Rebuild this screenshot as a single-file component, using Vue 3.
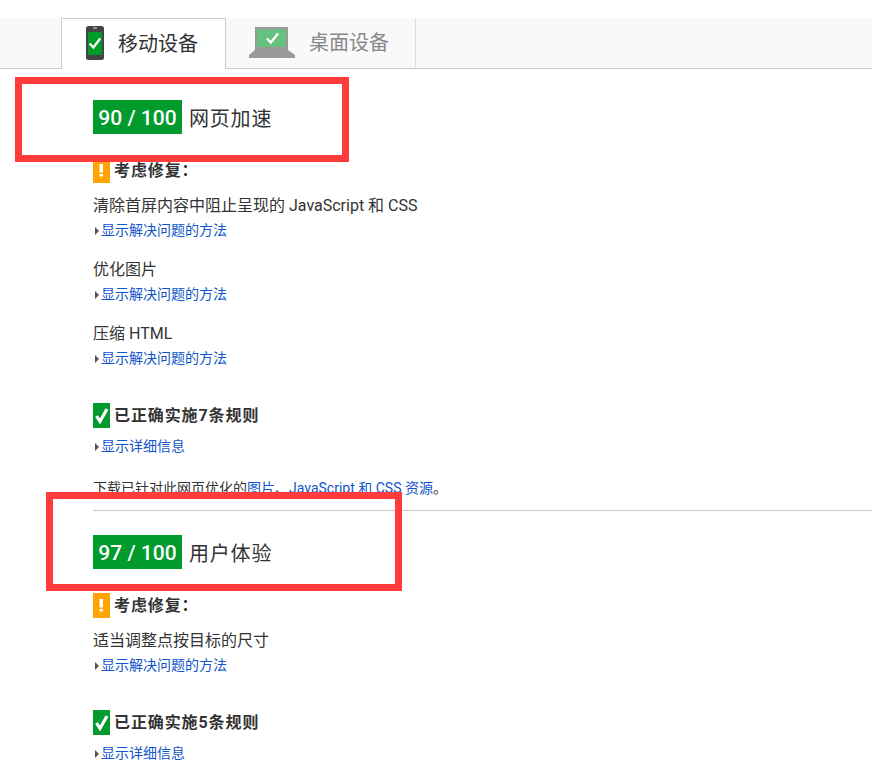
<script setup>
const sections = [
  {
    score: '90 / 100',
    label: '网页加速',
    fixes: ['清除首屏内容中阻止呈现的 JavaScript 和 CSS', '优化图片', '压缩 HTML'],
    passed: '已正确实施7条规则',
  },
  {
    score: '97 / 100',
    label: '用户体验',
    fixes: ['适当调整点按目标的尺寸'],
    passed: '已正确实施5条规则',
  },
]
</script>

<template>
  <div class="page">
    <nav class="tabs">
      <div class="tab active">
        <svg class="tab-icon" width="18" height="34" viewBox="0 0 18 34">
          <rect x="0" y="0" width="18" height="34" rx="2.5" fill="#444" />
          <rect x="7" y="1.5" width="4" height="1" fill="#ddd" />
          <rect x="2" y="6" width="14" height="23" fill="#009a2d" />
          <path d="M3.6 17.5 L7.4 21.5 L14.2 12.6" fill="none" stroke="#fff" stroke-width="2.4" />
        </svg>
        <span>移动设备</span>
      </div>
      <div class="tab idle">
        <svg class="tab-icon" width="46" height="31" viewBox="0 0 46 31">
          <rect x="6" y="0" width="33" height="23" fill="#999" />
          <rect x="8" y="2" width="29" height="18" fill="#66c17f" />
          <path d="M18 11.5 L21.8 15.5 L29 6.5" fill="none" stroke="#fff" stroke-width="2.4" />
          <path d="M6 23 H39 L46 28 V31 H0 V28 Z" fill="#999" />
        </svg>
        <span>桌面设备</span>
      </div>
    </nav>

    <main class="content">
      <section v-for="(s, i) in sections" :key="s.label" class="section">
        <hr v-if="i > 0" class="divider" />
        <h2 class="head">
          <span class="score">{{ s.score }}</span>
          <span class="label">{{ s.label }}</span>
        </h2>

        <h3 class="group warn-group">
          <span class="mark warn">
            <svg width="17" height="25" viewBox="0 0 17 25">
              <rect x="6.5" y="6" width="3.5" height="8.5" fill="#fff" />
              <rect x="6.5" y="16" width="3.5" height="2.5" fill="#fff" />
            </svg>
          </span>
          <span class="group-text">考虑修复：</span>
        </h3>
        <div v-for="(f, j) in s.fixes" :key="f" class="fix" :class="{ first: j === 0 }">
          <p class="fix-title">{{ f }}</p>
          <a class="more"><i class="arrow"></i>显示解决问题的方法</a>
        </div>

        <h3 class="group ok-group">
          <span class="mark ok">
            <svg width="17" height="25" viewBox="0 0 17 25">
              <path d="M3.5 13 L7 18.5 L14 6" fill="none" stroke="#fff" stroke-width="3.2" />
            </svg>
          </span>
          <span class="group-text">{{ s.passed }}</span>
        </h3>
        <a class="more detail"><i class="arrow"></i>显示详细信息</a>

        <p v-if="i === 0" class="note">
          下载已针对此网页优化的<a>图片、JavaScript 和 CSS 资源</a>。
        </p>
      </section>
    </main>

    <div class="callout one"></div>
    <div class="callout two"></div>
  </div>
</template>

<style scoped>
.page {
  position: relative;
  width: 872px;
  height: 767px;
  overflow: hidden;
  background: #fff;
  color: #333;
  font-family: Roboto, "Noto Sans CJK SC", sans-serif;
}
.tabs {
  display: flex;
  box-sizing: border-box;
  height: 51px;
  margin-top: 18px;
  padding-left: 61px;
  background: #f9f9f9;
  border-bottom: 1px solid #ccc;
}
.tab {
  display: flex;
  align-items: center;
  box-sizing: border-box;
  font-size: 20px;
}
.tab-icon {
  flex: none;
  margin-top: 2px;
}
.tab.active {
  width: 165px;
  height: 51px;
  padding: 0 0 4px 24px;
  gap: 14px;
  background: #fff;
  border: 1px solid #ccc;
  border-bottom: 0;
}
.tab.idle {
  width: 190px;
  height: 50px;
  padding: 0 0 4px 23px;
  gap: 14px;
  color: #888;
  border-right: 1px solid #ddd;
}
.content {
  padding-left: 93px;
}
.head {
  display: flex;
  align-items: center;
  gap: 7px;
  height: 34px;
  margin: 31px 0 0;
  font-size: 20px;
  font-weight: 400;
}
.label {
  letter-spacing: 0.8px;
}
.section + .section .head {
  margin-top: 24px;
}
.score {
  box-sizing: border-box;
  width: 89px;
  height: 34px;
  line-height: 36px;
  text-align: center;
  color: #fff;
  background: #009a2d;
  font-size: 21px;
  font-weight: 500;
}
.group {
  display: flex;
  align-items: center;
  gap: 4px;
  height: 25px;
  margin: 0;
  font-size: 16px;
  font-weight: 700;
}
.group-text {
  margin-bottom: 4px;
  letter-spacing: 0.9px;
}
.warn-group {
  margin-top: 24px;
}
.ok-group {
  margin-top: 33px;
}
.mark {
  display: block;
  width: 17px;
  height: 25px;
}
.mark svg {
  display: block;
}
.warn {
  background: #ffa400;
}
.ok {
  background: #009a2d;
}
.fix {
  margin-top: 15px;
}
.fix.first {
  margin-top: 10px;
}
.fix-title {
  height: 24px;
  margin: 0 0 1px;
  line-height: 26px;
  font-size: 16px;
}
.more {
  display: flex;
  align-items: center;
  box-sizing: border-box;
  height: 24px;
  padding-bottom: 2px;
  color: #15c;
  font-size: 14px;
}
.detail {
  margin-top: 6px;
}
.arrow {
  width: 0;
  height: 0;
  margin: 3px 2px 0 2px;
  border-left: 4px solid #555;
  border-top: 4px solid transparent;
  border-bottom: 4px solid transparent;
}
.note {
  height: 24px;
  margin: 17px 0 0;
  line-height: 26px;
  font-size: 14px;
}
.note a {
  color: #15c;
}
.divider {
  height: 1px;
  margin: 11px 0 0;
  border: 0;
  background: #ccc;
}
.callout {
  position: absolute;
  box-sizing: border-box;
  border: 7px solid #ff3b3b;
}
.callout.one {
  left: 15px;
  top: 77px;
  width: 334px;
  height: 85px;
}
.callout.two {
  left: 46px;
  top: 492px;
  width: 356px;
  height: 99px;
}
</style>

<style>
html, body {
  margin: 0;
  background: #fff;
}
</style>
